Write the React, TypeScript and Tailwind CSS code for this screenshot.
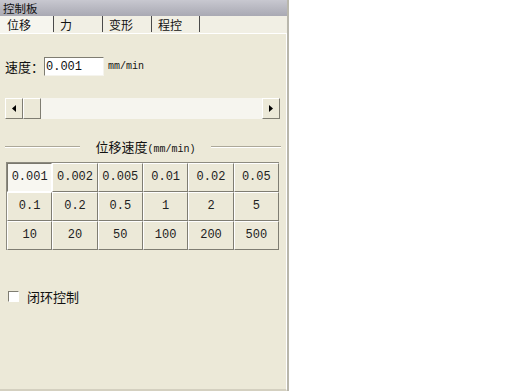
import React from "react"

const cn = "font-['SimSun','Noto_Sans_CJK_SC',sans-serif]"
const mono = "font-['Liberation_Mono','Noto_Sans_CJK_SC',monospace]"

const speeds = [
  ["0.001", "0.002", "0.005", "0.01", "0.02", "0.05"],
  ["0.1", "0.2", "0.5", "1", "2", "5"],
  ["10", "20", "50", "100", "200", "500"],
]

const tabs = ["位移", "力", "变形", "程控"]

function SpeedButton({ label, active }: { label: string; active?: boolean }) {
  return (
    <div
      className={
        "flex h-[29px] items-center justify-center border text-[12px] text-[#222] " +
        mono +
        (active
          ? " border-t-[#7a786e] border-l-[#7a786e] border-r-white border-b-white bg-[#f8f7f1]"
          : " border-t-white border-l-white border-r-[#7f7d72] border-b-[#7f7d72] bg-[#ece9d8]")
      }
    >
      {label}
    </div>
  )
}

export default function App() {
  return (
    <div className="flex h-[391px] w-[526px] bg-white">
      <div className="flex w-[289px] flex-col border-r-2 border-[#b9b7ac] bg-[#ece9d8]">
        {/* title bar */}
        <div className={"h-[16px] bg-gradient-to-b from-[#c8c8d0] to-[#a9a9b3] pl-[3px] text-[11.5px] leading-[16px] text-[#111] " + cn}>
          控制板
        </div>

        {/* tabs */}
        <div className="flex h-[18px] border-b border-white bg-[#f1efe4]">
          {tabs.map((t, i) => (
            <div key={t} className={"flex h-full items-end pb-[1px] " + (i === 0 ? "w-[53px] bg-[#f6f5ee]" : "w-[49px]")}>
              <div
                className={
                  "flex h-[16px] flex-1 items-center text-[12px] leading-[15px] text-[#111] " +
                  cn +
                  (i === 0 ? " pl-[7px]" : " border-l border-[#4a4a4a] pl-[6px]") +
                  (i === tabs.length - 1 ? " border-r" : "")
                }
              >
                {t}
              </div>
            </div>
          ))}
        </div>

        {/* content */}
        <div className="flex flex-1 flex-col border-b-2 border-r border-[#d4d0c0] border-r-white px-[5px]">
          <div className="mt-[23px] flex items-center">
            <span className={"text-[13px] text-[#111] " + cn}>速度：</span>
            <div className="flex h-[19px] w-[60px] items-center border border-t-[#7f7d72] border-l-[#7f7d72] border-b-[#f5f4ee] border-r-[#f5f4ee] bg-white pl-[1px] text-[12px] text-[#111]">
              <span className={mono}>0.001</span>
            </div>
            <span className={"ml-[4px] text-[10px] text-[#111] " + mono}>mm/min</span>
          </div>

          {/* scrollbar */}
          <div className="mt-[21px] flex h-[21px] w-[275px] items-stretch bg-[#f6f5ef]">
            <div className="flex w-[18px] items-center justify-center border border-t-white border-l-white border-r-[#7f7d72] border-b-[#7f7d72] bg-[#ece9d8]">
              <svg width="4" height="7" viewBox="0 0 4 7"><path d="M4 0L0 3.5L4 7Z" fill="#000" /></svg>
            </div>
            <div className="w-[18px] border border-t-white border-l-white border-r-[#7f7d72] border-b-[#7f7d72] bg-[#ece9d8]" />
            <div className="flex-1" />
            <div className="flex w-[18px] items-center justify-center border border-t-white border-l-white border-r-[#7f7d72] border-b-[#7f7d72] bg-[#ece9d8]">
              <svg width="4" height="7" viewBox="0 0 4 7"><path d="M0 0L4 3.5L0 7Z" fill="#000" /></svg>
            </div>
          </div>

          {/* group label */}
          <div className="mt-[18px] flex items-center">
            <div className="h-[2px] w-[75px] border-t border-b border-t-[#aca899] border-b-white" />
            <div className={"flex-1 text-center text-[13px] text-[#111] " + cn}>
              位移速度<span className={"text-[10px] " + mono}>(mm/min)</span>
            </div>
            <div className="h-[2px] w-[70px] border-t border-b border-t-[#aca899] border-b-white" />
          </div>

          {/* speed grid */}
          <div className="ml-[1px] mt-[5px] grid w-[273px] grid-cols-6 border-l border-t border-[#8d8b80]">
            {speeds.flat().map((s, i) => (
              <SpeedButton key={s} label={s} active={i === 0} />
            ))}
          </div>

          {/* checkbox */}
          <div className="mt-[37px] flex items-center pl-[3px]">
            <div className="h-[11px] w-[11px] border border-t-[#7f7d72] border-l-[#7f7d72] border-b-white border-r-white bg-white" />
            <span className={"ml-[8px] text-[13px] text-[#111] " + cn}>闭环控制</span>
          </div>
        </div>
      </div>
    </div>
  )
}
